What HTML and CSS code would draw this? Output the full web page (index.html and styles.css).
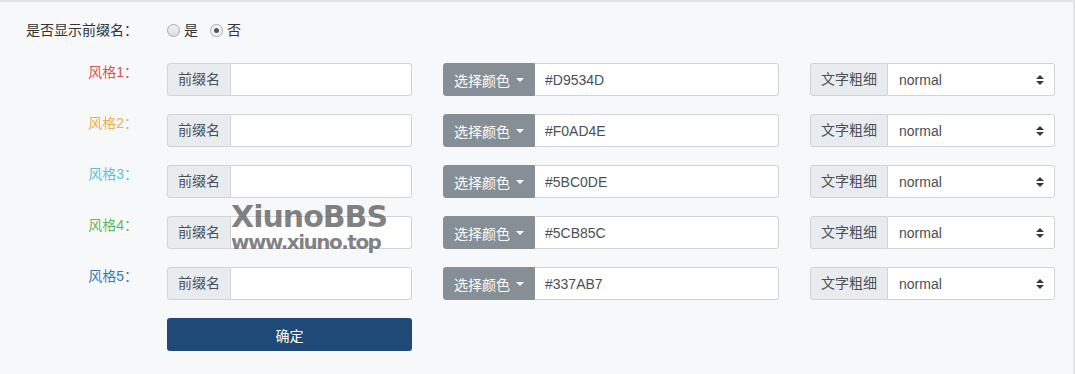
FILE: index.html
```html
<!doctype html>
<html>
<head>
<title>前缀设置</title>
<meta charset="utf-8">
<link rel="stylesheet" href="styles.css">
</head>
<body>
<div class="page">
	<div class="row row-first">
		<div class="label">是否显示前缀名：</div>
		<div class="radios">
			<label class="radio"><input type="radio" name="show"><span>是</span></label>
			<label class="radio"><input type="radio" name="show" checked><span>否</span></label>
		</div>
	</div>

	<div class="row">
		<div class="label c1">风格1：</div>
		<div class="group col-a"><span class="addon">前缀名</span><input class="field" type="text"></div>
		<div class="group col-b"><span class="btn-color">选择颜色<i class="caret"></i></span><input class="field" type="text" value="#D9534D"></div>
		<div class="group col-c"><span class="addon">文字粗细</span><div class="select-wrap"><select class="field select"><option>normal</option><option>bold</option></select><svg class="arrows" width="8" height="10" viewBox="0 0 8 10"><polygon points="0,4 4,0 8,4" fill="#343a40"/><polygon points="0,6 8,6 4,10" fill="#343a40"/></svg></div></div>
	</div>

	<div class="row">
		<div class="label c2">风格2：</div>
		<div class="group col-a"><span class="addon">前缀名</span><input class="field" type="text"></div>
		<div class="group col-b"><span class="btn-color">选择颜色<i class="caret"></i></span><input class="field" type="text" value="#F0AD4E"></div>
		<div class="group col-c"><span class="addon">文字粗细</span><div class="select-wrap"><select class="field select"><option>normal</option><option>bold</option></select><svg class="arrows" width="8" height="10" viewBox="0 0 8 10"><polygon points="0,4 4,0 8,4" fill="#343a40"/><polygon points="0,6 8,6 4,10" fill="#343a40"/></svg></div></div>
	</div>

	<div class="row">
		<div class="label c3">风格3：</div>
		<div class="group col-a"><span class="addon">前缀名</span><input class="field" type="text"></div>
		<div class="group col-b"><span class="btn-color">选择颜色<i class="caret"></i></span><input class="field" type="text" value="#5BC0DE"></div>
		<div class="group col-c"><span class="addon">文字粗细</span><div class="select-wrap"><select class="field select"><option>normal</option><option>bold</option></select><svg class="arrows" width="8" height="10" viewBox="0 0 8 10"><polygon points="0,4 4,0 8,4" fill="#343a40"/><polygon points="0,6 8,6 4,10" fill="#343a40"/></svg></div></div>
	</div>

	<div class="row">
		<div class="label c4">风格4：</div>
		<div class="group col-a"><span class="addon">前缀名</span><input class="field" type="text"></div>
		<div class="group col-b"><span class="btn-color">选择颜色<i class="caret"></i></span><input class="field" type="text" value="#5CB85C"></div>
		<div class="group col-c"><span class="addon">文字粗细</span><div class="select-wrap"><select class="field select"><option>normal</option><option>bold</option></select><svg class="arrows" width="8" height="10" viewBox="0 0 8 10"><polygon points="0,4 4,0 8,4" fill="#343a40"/><polygon points="0,6 8,6 4,10" fill="#343a40"/></svg></div></div>
	</div>

	<div class="row">
		<div class="label c5">风格5：</div>
		<div class="group col-a"><span class="addon">前缀名</span><input class="field" type="text"></div>
		<div class="group col-b"><span class="btn-color">选择颜色<i class="caret"></i></span><input class="field" type="text" value="#337AB7"></div>
		<div class="group col-c"><span class="addon">文字粗细</span><div class="select-wrap"><select class="field select"><option>normal</option><option>bold</option></select><svg class="arrows" width="8" height="10" viewBox="0 0 8 10"><polygon points="0,4 4,0 8,4" fill="#343a40"/><polygon points="0,6 8,6 4,10" fill="#343a40"/></svg></div></div>
	</div>

	<div class="row">
		<div class="label"></div>
		<button class="submit" type="button">确定</button>
	</div>

	<div class="watermark">
		<div class="wm-big">XiunoBBS</div>
		<div class="wm-small">www.xiuno.top</div>
	</div>
</div>
</body>
</html>
```

FILE: styles.css
```css
html,body{margin:0;padding:0;}
body{font:14px "Liberation Sans","Noto Sans CJK SC",sans-serif;color:#333;background:#f7f8fa;}

.page{position:relative;box-sizing:border-box;width:1075px;height:374px;padding-top:18px;background:#f7f8fa;border-top:2px solid #e3e4e8;border-right:2px solid #e3e4e8;}

.row{display:flex;gap:31px;margin-bottom:18px;}
.row-first{height:21px;line-height:21px;margin-bottom:22px;gap:0;}
.label{width:138px;flex:none;margin-right:-2px;text-align:right;line-height:19px;}
.row-first .label{line-height:21px;margin-right:29px;}
.c1{color:#d9534f;}
.c2{color:#f0ad4e;}
.c3{color:#5bc0de;}
.c4{color:#5cb85c;}
.c5{color:#337ab7;}

.radios{display:flex;gap:12px;}
.radio{display:flex;align-items:center;cursor:pointer;}
.radio input{-webkit-appearance:none;appearance:none;width:13px;height:13px;margin:0 4px 0 0;border:1px solid #a9a9a9;border-radius:50%;background:linear-gradient(#f4f4f4,#dcdcdc);box-sizing:border-box;position:relative;}
.radio input:checked{background:#f3f3f3;}
.radio input:checked::after{content:"";position:absolute;left:3px;top:3px;width:5px;height:5px;border-radius:50%;background:#555;}

.group{display:flex;height:33px;box-sizing:border-box;}
.col-a,.col-c{width:245px;}
.col-b{width:336px;}
.addon{flex:none;padding:0 10px;line-height:31px;color:#495057;background:#e9ecef;border:1px solid #ced4da;border-radius:3px 0 0 3px;}
.btn-color{flex:none;display:flex;align-items:center;padding:0 10px 0 10px;color:#fff;background:#868e96;border:1px solid #868e96;border-radius:3px 0 0 3px;}
.caret{display:inline-block;margin-left:6px;width:0;height:0;border-top:4px solid #fff;border-left:4px solid transparent;border-right:4px solid transparent;}
.field{flex:1;min-width:0;box-sizing:border-box;height:33px;margin:0;padding:0 10px;font:14px "Liberation Sans","Noto Sans CJK SC",sans-serif;color:#495057;background:#fff;border:1px solid #ced4da;border-left:0;border-radius:0 3px 3px 0;outline:none;}

.select-wrap{flex:1;display:flex;position:relative;}
.select{-webkit-appearance:none;appearance:none;padding-left:11px;}
.arrows{position:absolute;right:11px;top:12px;pointer-events:none;}

.submit{width:245px;height:33px;padding:0;font:14px "Liberation Sans","Noto Sans CJK SC",sans-serif;color:#fff;background:#1f4a78;border:0;border-radius:3px;cursor:pointer;}

.watermark{position:absolute;left:231px;top:199px;color:rgba(95,95,95,0.78);font-family:"DejaVu Sans",sans-serif;font-weight:bold;pointer-events:none;}
.wm-big{font-size:30px;line-height:31px;letter-spacing:-1px;}
.wm-small{font-size:20px;line-height:20px;letter-spacing:-1.5px;}
```
